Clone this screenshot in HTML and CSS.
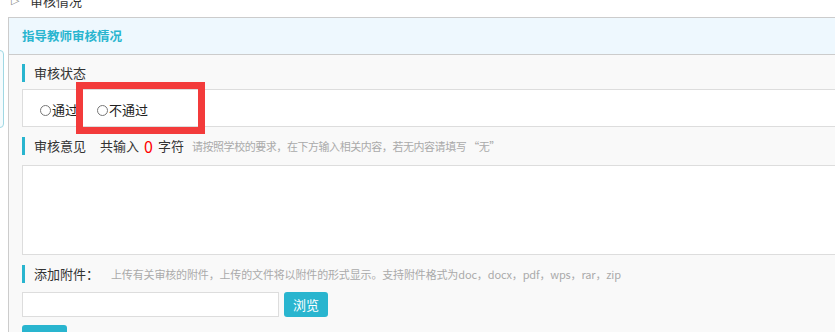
FILE: index.html
```html
<!DOCTYPE html>
<html>

<head>
  <title>审核情况</title>
  <link rel="stylesheet" href="styles.css">
</head>

<body>
  <div class="crumb"><span class="crumb-arrow">▷</span>审核情况</div>
  <div class="side-tab"></div>

  <div class="panel">
    <div class="panel-head">指导教师审核情况</div>
    <div class="panel-body">
      <div class="sec-title">审核状态</div>
      <div class="radio-box">
        <label class="radio"><span class="dot"></span>通过</label>
        <label class="radio"><span class="dot"></span>不通过</label>
      </div>

      <div class="sec-title spaced">
        审核意见
        <span class="count">共输入<em>0</em>字符</span>
        <span class="hint narrow">请按照学校的要求，在下方输入相关内容，若无内容请填写 “无”</span>
      </div>
      <div class="text-box"></div>

      <div class="sec-title spaced">
        添加附件：
        <span class="hint wide">上传有关审核的附件，上传的文件将以附件的形式显示。支持附件格式为doc，docx，pdf，wps，rar，zip</span>
      </div>
      <div class="file-row">
        <div class="file-input"></div>
        <button class="btn">浏览</button>
      </div>
      <button class="btn add">添加</button>
    </div>
  </div>

  <div class="mark"></div>
</body>

</html>
```

FILE: styles.css
```css
html,
body {
  margin: 0;
  height: 100%;
  overflow: hidden;
}

body {
  background-color: #fff;
  color: #333;
  font: 13px/1.4 "Noto Sans CJK SC", "Liberation Sans", sans-serif;
  position: relative;
}

.crumb {
  margin-top: -7px;
  padding-left: 30px;
  height: 16px;
  line-height: 16px;
  font-size: 13px;
  color: #333;
  position: relative;
}

.crumb-arrow {
  position: absolute;
  left: 11px;
  top: 0;
  font: 11px/16px "DejaVu Sans", sans-serif;
  color: #888;
}

.side-tab {
  position: absolute;
  left: -20px;
  top: 50px;
  width: 22px;
  height: 76px;
  border: 1px solid #9fd8e4;
  border-radius: 4px;
  background-color: #f5fbfd;
}

.panel {
  margin: 8px 0 0 8px;
  width: 1000px;
  border-left: 1px solid #ccc;
  border-top: 1px solid #ccc;
  background-color: #f9f9f9;
  height: 400px;
}

.panel-head {
  height: 36px;
  line-height: 36px;
  padding-left: 13px;
  background-color: #eef8fe;
  border-bottom: 1px solid #ccc;
  color: #29b5cf;
  font-weight: bold;
  font-size: 12.5px;
}

.panel-body {
  padding: 9px 0 0 13px;
}

.sec-title {
  height: 18px;
  line-height: 18px;
  border-left: 3px solid #29b5cf;
  padding-left: 9px;
  font-size: 13px;
  color: #333;
  display: flex;
  align-items: center;
}

.sec-title.spaced {
  margin-top: 10px;
}

.count {
  margin-left: 14px;
  display: flex;
  align-items: center;
}

.count em {
  font-style: normal;
  color: #f00;
  font-size: 16px;
  margin: 0 5px;
}

.hint {
  margin-left: 8px;
  font-size: 11px;
  color: #aaa;
  letter-spacing: -0.15px;
}

.hint.narrow {
  letter-spacing: -0.45px;
}

.hint.wide {
  margin-left: 12px;
}

.radio-box {
  margin-top: 7px;
  background-color: #fff;
  border: 1px solid #ddd;
  display: flex;
  align-items: center;
  padding-left: 17px;
  padding-top: 4px;
  box-sizing: border-box;
  height: 38px;
}

.radio {
  display: flex;
  align-items: center;
  margin-right: 19px;
  color: #222;
}

.dot {
  width: 9px;
  height: 9px;
  border: 1px solid #777;
  border-radius: 50%;
  margin-right: 1px;
}

.text-box {
  margin-top: 10px;
  height: 88px;
  background-color: #fff;
  border: 1px solid #ddd;
}

.file-row {
  margin-top: 9px;
  display: flex;
  gap: 5px;
}

.file-input {
  width: 255px;
  height: 23px;
  background-color: #fff;
  border: 1px solid #ddd;
}

.btn {
  height: 25px;
  width: 44px;
  border: none;
  border-radius: 3px;
  background-color: #29b5cf;
  color: #fff;
  font: 13px/25px "Noto Sans CJK SC", sans-serif;
  padding: 0;
}

.btn.add {
  margin-top: 8px;
  width: 45px;
  display: block;
}

.mark {
  position: absolute;
  left: 76px;
  top: 82px;
  width: 115px;
  height: 38px;
  border: 7px solid #f33b3b;
}
```
